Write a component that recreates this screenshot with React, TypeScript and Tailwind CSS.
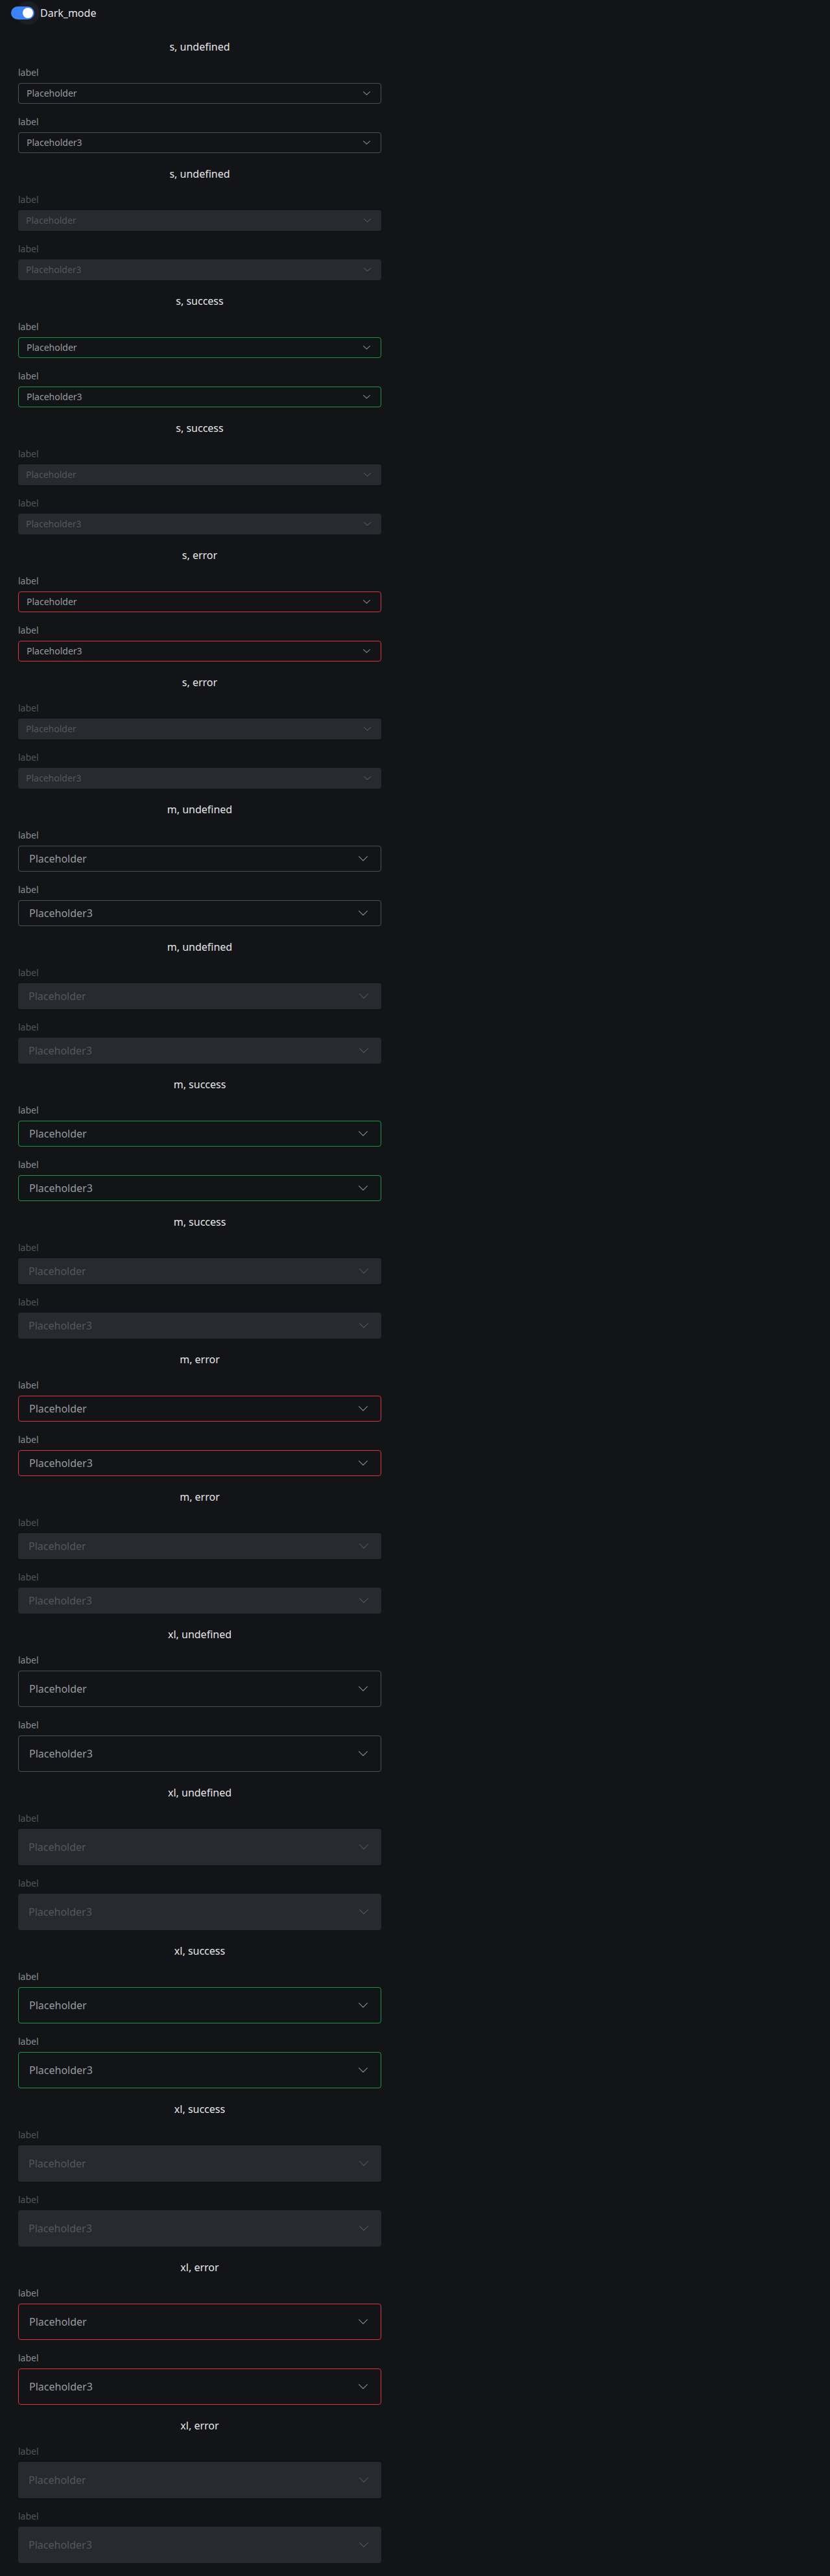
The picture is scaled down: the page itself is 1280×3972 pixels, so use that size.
import React from 'react';

type Size = 's' | 'm' | 'xl';
type Status = 'undefined' | 'success' | 'error';

const sizeBox: Record<Size, string> = {
  s: 'h-8 pl-3 pr-4 text-sm',
  m: 'h-10 pl-4 pr-5 text-base',
  xl: 'h-14 pl-4 pr-5 text-base',
};

const borderFor: Record<Status, string> = {
  undefined: 'border-[#4d4f57]',
  success: 'border-[#1f9a42]',
  error: 'border-[#d8353c]',
};

const Chevron = ({ size }: { size: Size }) => {
  const w = size === 's' ? 11 : 14;
  const h = size === 's' ? 6 : 8;
  return (
    <svg width={w} height={h} viewBox={`0 0 ${w} ${h}`} fill="none">
      <path
        d={`M0.6 0.6 L${w / 2} ${h - 0.8} L${w - 0.6} 0.6`}
        stroke="currentColor"
        strokeWidth="1.1"
        strokeLinecap="round"
        strokeLinejoin="round"
      />
    </svg>
  );
};

const Field = ({
  size,
  status,
  disabled,
  placeholder,
}: {
  size: Size;
  status: Status;
  disabled: boolean;
  placeholder: string;
}) => (
  <div className="mt-[18px]">
    <div className={`text-sm leading-5 ${disabled ? 'text-[#53565c]' : 'text-[#8a8d93]'}`}>label</div>
    <div
      className={
        'mt-[6px] flex items-center justify-between rounded ' +
        sizeBox[size] +
        (disabled
          ? ' bg-[#292a2f] text-[#54575d]'
          : ' border ' + borderFor[status] + ' text-[#999ba1]')
      }
    >
      <span>{placeholder}</span>
      <span className={disabled ? 'text-[#53565c]' : 'text-[#8c8f96]'}>
        <Chevron size={size} />
      </span>
    </div>
  </div>
);

const Section = ({ size, status, disabled }: { size: Size; status: Status; disabled: boolean }) => (
  <div className="flex flex-col pb-5">
    <h3 className="text-center text-base leading-6 text-[#e6e6e8]">
      {size}, {status}
    </h3>
    <Field size={size} status={status} disabled={disabled} placeholder="Placeholder" />
    <Field size={size} status={status} disabled={disabled} placeholder="Placeholder3" />
  </div>
);

const sizes: Size[] = ['s', 'm', 'xl'];
const statuses: Status[] = ['undefined', 'success', 'error'];

export default function App() {
  return (
    <div className="min-h-screen bg-[#131418] font-['Noto_Sans',sans-serif]">
      <div className="flex h-10 items-center pl-[17px]">
        <div className="relative h-5 w-9">
          <span className="absolute left-[8px] top-[-8px] h-9 w-9 rounded-full bg-[#1d1e23]" />
          <span className="absolute inset-0 rounded-full bg-[#3d82f6]" />
          <span className="absolute right-0.5 top-0.5 h-4 w-4 rounded-full bg-white" />
        </div>
        <span className="ml-[9px] text-base text-[#e6e6e8]">Dark_mode</span>
      </div>
      <div className="ml-[28px] w-[560px] pt-5">
        {sizes.map((size) =>
          statuses.map((status) =>
            [false, true].map((disabled) => (
              <Section key={size + status + disabled} size={size} status={status} disabled={disabled} />
            ))
          )
        )}
      </div>
    </div>
  );
}
